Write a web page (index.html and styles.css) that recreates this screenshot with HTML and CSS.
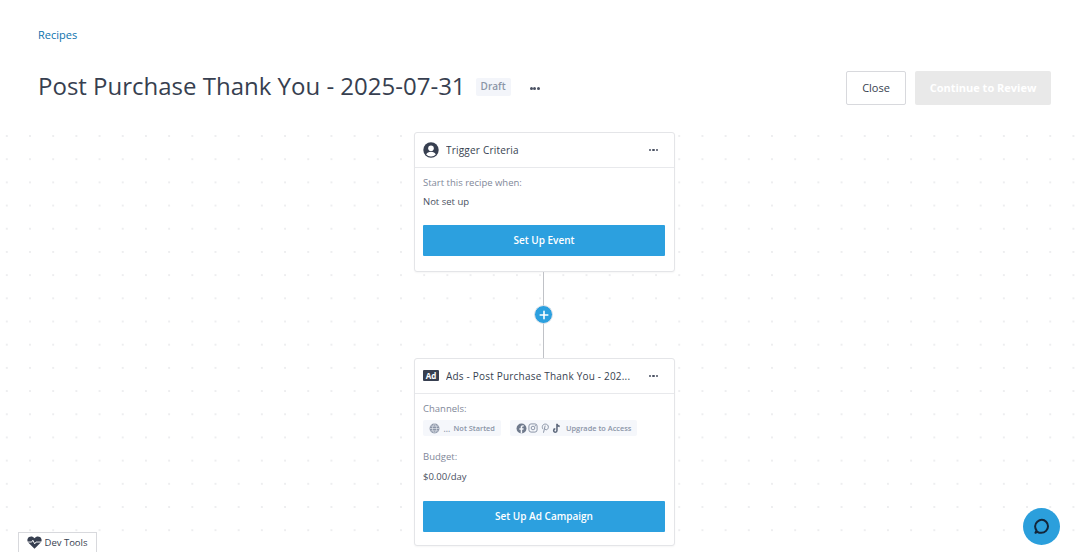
FILE: index.html
```html
<!DOCTYPE html>
<html lang="en">
<head>
  <meta charset="UTF-8">
  <meta name="viewport" content="width=device-width, initial-scale=1.0">
  <title>Post Purchase Thank You - 2025-07-31</title>
  <link rel="stylesheet" href="styles.css">
</head>
<body>
  <div class="page-header">
    <a class="breadcrumb" href="#">Recipes</a>
    <div class="title-row">
      <h1>Post Purchase Thank You - 2025-07-31</h1>
      <span class="status-badge">Draft</span>
      <span class="dots title-dots"><i></i><i></i><i></i></span>
      <div class="title-actions">
        <button class="btn-close">Close</button>
        <button class="btn-continue">Continue to Review</button>
      </div>
    </div>
  </div>

  <div class="canvas">
    <div class="card">
      <div class="card-header">
        <svg class="card-icon" viewBox="0 0 16 16" width="16" height="16">
          <circle cx="8" cy="8" r="7.7" fill="#373f50"/>
          <circle cx="8" cy="6.2" r="2.8" fill="#fff"/>
          <path d="M3.2 12.4c.8-1.9 2.5-2.7 4.8-2.7s4 .8 4.8 2.7A6.3 6.3 0 0 1 8 14.4a6.3 6.3 0 0 1-4.8-2z" fill="#fff"/>
        </svg>
        <span class="card-title">Trigger Criteria</span>
        <span class="dots"><i></i><i></i><i></i></span>
      </div>
      <div class="card-body">
        <div class="field-label">Start this recipe when:</div>
        <div class="field-value">Not set up</div>
        <button class="btn-primary">Set Up Event</button>
      </div>
    </div>

    <div class="connector">
      <div class="add-step">
        <svg viewBox="0 0 10 10" width="10" height="10">
          <path d="M5 1.2v7.6M1.2 5h7.6" stroke="#fff" stroke-width="1.6" stroke-linecap="round"/>
        </svg>
      </div>
    </div>

    <div class="card card-ads">
      <div class="card-header">
        <span class="ad-icon">Ad</span>
        <span class="card-title">Ads - Post Purchase Thank You - 202...</span>
        <span class="dots"><i></i><i></i><i></i></span>
      </div>
      <div class="card-body">
        <div class="field-label">Channels:</div>
        <div class="channels">
          <span class="channel-pill">
            <svg class="pill-icon" viewBox="0 0 12 12" width="11" height="11">
              <circle cx="6" cy="6" r="5.4" fill="#8b95a7"/>
              <path d="M.8 6h10.4M1.6 3.4h8.800M1.600 8.600h8.800M6 .8c-3 3-3 7.400 0 10.400M6 .8c3 3 3 7.400 0 10.400" stroke="#f5f7fb" stroke-width=".6" fill="none"/>
            </svg>
            <span class="pill-more">...</span>
            <span class="pill-text">Not Started</span>
          </span>
          <span class="channel-pill">
            <svg class="pill-icon" viewBox="0 0 12 12" width="11" height="11">
              <circle cx="6" cy="6" r="5.4" fill="#6f7a8c"/>
              <path d="M6.700 11.400V7.300h1.400l.3-1.600H6.700v-1c0-.5.2-.8.9-.8h.9V2.500C8.200 2.400 7.800 2.400 7.300 2.400 6 2.400 5.100 3.200 5.100 4.500v1.200H3.700v1.600h1.400v4.100z" fill="#f5f7fb"/>
            </svg>
            <svg class="pill-icon" viewBox="0 0 12 12" width="10" height="10">
              <rect x="1.100" y="1.100" width="9.800" height="9.800" rx="2.600" fill="none" stroke="#8b95a7" stroke-width="1.200"/>
              <circle cx="6" cy="6" r="2.200" fill="none" stroke="#8b95a7" stroke-width="1.200"/>
              <circle cx="8.800" cy="3.200" r=".7" fill="#8b95a7"/>
            </svg>
            <svg class="pill-icon" viewBox="0 0 12 12" width="10" height="10">
              <path d="M3.300 7c-1.500-2.400-.2-5.700 3-5.700 2.500 0 3.900 1.700 3.700 3.800-.2 2-1.500 3.200-2.800 3-.8-.1-1.300-.6-1.500-1.200M6.100 3.600 4.300 11.200" fill="none" stroke="#8b95a7" stroke-width="1.200" stroke-linecap="round"/>
            </svg>
            <svg class="pill-icon" viewBox="0 0 12 12" width="11" height="11">
              <path d="M6.500.8v7.400a1.800 1.800 0 1 1-1.800-1.800M6.500 1c.2 1.500 1.200 2.500 3 2.700" fill="none" stroke="#5f6a7d" stroke-width="1.700"/>
            </svg>
            <span class="pill-text">Upgrade to Access</span>
          </span>
        </div>
        <div class="field-label budget-label">Budget:</div>
        <div class="field-value">$0.00/day</div>
        <button class="btn-primary">Set Up Ad Campaign</button>
      </div>
    </div>
  </div>

  <div class="dev-tools">
    <svg viewBox="0 0 16 14" width="15" height="13">
      <path d="M8 13.600 1.500 7.400C-.4 5.400.100 2.300 2.200 1 4.100-.1 6.500.4 8 2.300 9.500.4 11.900-.1 13.800 1c2.100 1.300 2.600 4.400.7 6.400z" fill="#373f50"/>
      <path d="M0 6.500h5l1.200-2 2 4 1.400-2h6.400" fill="none" stroke="#fff" stroke-width="1"/>
    </svg>
    <span>Dev Tools</span>
  </div>

  <div class="chat-button">
    <svg viewBox="0 0 20 20" width="20" height="20">
      <path d="M3.400 16.800c.9-.2 1.500-.5 2.100-1 1.100.7 2.400 1.100 3.700 1 3.900 0 6.800-2.900 6.800-6.500S13.100 3.800 9.900 3.800 3.100 6.700 3.100 10.300c0 1.500.5 2.900 1.400 4-.2 1-.6 1.800-1.100 2.500z" fill="none" stroke="#13263a" stroke-width="2" stroke-linejoin="round"/>
    </svg>
  </div>
</body>
</html>
```

FILE: styles.css
```css
* {
  box-sizing: border-box;
}

html, body {
  height: 100%;
}

body {
  margin: 0;
  overflow: hidden;
  font-family: "Open Sans", sans-serif;
  color: #373f50;
  background-color: #fff;
}

.page-header {
  height: 125px;
  padding: 27px 34px 0 38px;
}

.breadcrumb {
  display: block;
  font-size: 11px;
  line-height: 16px;
  color: #0b72ad;
  text-decoration: none;
}

.title-row {
  display: flex;
  align-items: center;
  margin-top: 28px;
  height: 34px;
}

h1 {
  margin: 0 0 4px;
  font-size: 24px;
  font-weight: 400;
  line-height: 32px;
  color: #373f50;
}

.status-badge {
  margin: 0 0 2px 10px;
  padding: 0 5px;
  height: 18px;
  line-height: 17px;
  font-size: 10px;
  font-weight: 600;
  color: #8b95a7;
  background-color: #f3f5fa;
  border-radius: 2px;
}

.dots {
  display: flex;
  gap: 1px;
  align-items: center;
}

.dots i {
  width: 2.4px;
  height: 2.4px;
  border-radius: 50%;
  background-color: #4a5162;
}

.title-dots {
  margin-left: 19px;
  gap: 0.5px;
}

.title-dots i {
  width: 3px;
  height: 3px;
}

.title-actions {
  display: flex;
  gap: 9px;
  margin-left: auto;
}

.title-actions button {
  height: 34px;
  padding: 0 0 2px;
  font-family: inherit;
  font-size: 11px;
  border-radius: 2px;
}

.btn-close {
  width: 60px;
  background-color: #fff;
  border: 1px solid #d8d9dd;
  color: #373f50;
}

.btn-continue {
  width: 136px;
  background-color: #e9e9e9;
  border: none;
  color: #fff;
  font-weight: 700;
}

.canvas {
  height: 427px;
  padding: 7px 0 0 4px;
  display: flex;
  flex-direction: column;
  align-items: center;
  background-image: radial-gradient(circle, #e6e7e9 0.6px, transparent 0.9px);
  background-size: 23.2px 23.2px;
  background-position: -4.8px -0.6px;
}

.card {
  width: 261px;
  flex-shrink: 0;
  background-color: #fff;
  border: 1px solid #e4e5e8;
  border-radius: 3px;
  box-shadow: 0 1px 2px rgba(0, 0, 0, 0.04);
}

.card-header {
  height: 35px;
  padding: 0 16px 0 8px;
  display: flex;
  align-items: center;
  border-bottom: 1px solid #e8e9ec;
}

.card-icon {
  flex-shrink: 0;
}

.card-title {
  flex: 1;
  margin-left: 7px;
  font-size: 10px;
  font-weight: 500;
  letter-spacing: 0.2px;
  white-space: nowrap;
  overflow: hidden;
  color: #373f50;
}

.ad-icon {
  width: 16px;
  height: 11px;
  flex-shrink: 0;
  margin-bottom: 1px;
  background-color: #373f50;
  border-radius: 1px;
  color: #fff;
  font-size: 8px;
  font-weight: 700;
  line-height: 11px;
  text-align: center;
}

.card-body {
  padding: 8px 9px 15px 8px;
}

.card-ads .card-body {
  padding-bottom: 13px;
}

.field-label {
  font-size: 9.5px;
  line-height: 14px;
  color: #7f8899;
}

.field-value {
  margin-top: 5px;
  font-size: 9.5px;
  line-height: 14px;
  color: #4a5162;
}

.card-ads .field-value {
  margin-top: 6px;
}

.btn-primary {
  display: block;
  width: 242px;
  height: 31px;
  margin-top: 16px;
  padding: 0 0 2px;
  background-color: #2ca0df;
  border: none;
  border-radius: 1px;
  color: #fff;
  font-family: inherit;
  font-size: 10px;
  font-weight: 600;
}

.card-ads .btn-primary {
  margin-top: 17px;
}

.connector {
  position: relative;
  width: 1px;
  height: 86px;
  flex-shrink: 0;
  margin-right: 2px;
  background-color: #c0c2c7;
}

.add-step {
  position: absolute;
  left: -9px;
  top: 33px;
  width: 19px;
  height: 19px;
  display: flex;
  align-items: center;
  justify-content: center;
  background-color: #2ca0df;
  border: 1px solid #e2e5ea;
  border-radius: 50%;
}

.channels {
  display: flex;
  gap: 9px;
  margin-top: 4px;
}

.channel-pill {
  display: flex;
  align-items: center;
  gap: 1.5px;
  height: 16px;
  padding: 0 6px;
  background-color: #f5f7fb;
  border-radius: 2px;
}

.pill-text {
  margin-left: 2px;
  font-size: 7.4px;
  font-weight: 600;
  color: #8b95a7;
  white-space: nowrap;
}

.pill-more {
  margin-left: 2px;
  font-size: 8px;
  font-weight: 600;
  color: #8b95a7;
}

.budget-label {
  margin-top: 14px;
}

.dev-tools {
  position: fixed;
  left: 18px;
  bottom: 0;
  width: 79px;
  height: 20px;
  display: flex;
  align-items: center;
  justify-content: center;
  gap: 2px;
  background-color: #fff;
  border: 1px solid #d8d9dd;
  border-bottom: none;
  font-size: 9.5px;
  font-weight: 500;
  color: #373f50;
}

.chat-button {
  position: fixed;
  left: 1023px;
  top: 508px;
  width: 37px;
  height: 37px;
  padding-bottom: 1px;
  display: flex;
  align-items: center;
  justify-content: center;
  background-color: #2b9fdc;
  border-radius: 50%;
}
```
